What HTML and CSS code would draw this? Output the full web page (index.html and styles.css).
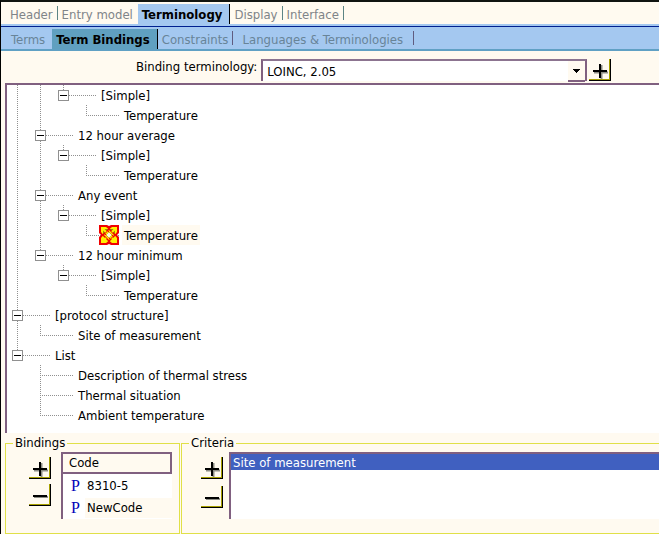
FILE: index.html
```html
<!DOCTYPE html>
<html lang="en">
<head>
<meta charset="utf-8">
<title>Term Bindings</title>
<link rel="stylesheet" href="styles.css">
</head>
<body>
<svg class="defs" width="0" height="0" aria-hidden="true">
  <symbol id="plus" viewBox="0 0 16 16"><path d="M2 9.5h14M9.5 2v14" stroke="#8c8c84" stroke-width="2"/><path d="M1 8h14M8 1v14" stroke="#000" stroke-width="2"/></symbol>
  <symbol id="minus" viewBox="0 0 16 16"><path d="M2 9h14" stroke="#8c8c84" stroke-width="2"/><path d="M1 8h14" stroke="#000" stroke-width="2"/></symbol>
</svg>
<nav class="tabs main-tabs">
  <a href="#header">Header</a>
  <a href="#entry" class="before">Entry model</a>
  <a href="#terminology" class="selected">Terminology</a>
  <a href="#display">Display</a>
  <a href="#interface">Interface</a>
</nav>
<nav class="tabs sub-tabs">
  <a href="#terms" class="before">Terms</a>
  <a href="#bindings" class="selected">Term Bindings</a>
  <a href="#constraints">Constraints</a>
  <a href="#languages" class="wide">Languages &amp; Terminologies</a>
</nav>
<main>
  <div class="picker">
    <label for="terminology">Binding terminology:</label>
    <div class="combo">
      <select id="terminology"><option>LOINC, 2.05</option></select>
      <span class="drop"><svg width="7" height="4" viewBox="0 0 7 4" shape-rendering="crispEdges"><path d="M0 0h7v1H6v1H5v1H4v1H3V3H2V2H1V1H0z"/></svg></span>
    </div>
    <button class="tool" aria-label="Add terminology"><svg width="16" height="16"><use href="#plus"/></svg></button>
  </div>
  <div class="tree">
    <ul>
      <li>
        <ul>
          <li>
            <ul>
              <li><div class="row"><button class="toggle" aria-label="Collapse"></button><span class="name">[Simple]</span></div>
                <ul><li><div class="row"><span class="name">Temperature</span></div></li></ul>
              </li>
            </ul>
          </li>
          <li><div class="row"><button class="toggle" aria-label="Collapse"></button><span class="name">12 hour average</span></div>
            <ul>
              <li><div class="row"><button class="toggle" aria-label="Collapse"></button><span class="name">[Simple]</span></div>
                <ul><li><div class="row"><span class="name">Temperature</span></div></li></ul>
              </li>
            </ul>
          </li>
          <li><div class="row"><button class="toggle" aria-label="Collapse"></button><span class="name">Any event</span></div>
            <ul>
              <li><div class="row"><button class="toggle" aria-label="Collapse"></button><span class="name">[Simple]</span></div>
                <ul><li><div class="row"><svg class="knot" width="20" height="20" viewBox="0 0 20 20">
                  <path d="M0 0h8l2 1 2-1h8v8l-2 2 2 2v8h-8l-2-1-2 1H0v-8l2-2-2-2z" fill="#f00000"/>
                  <path d="M2 2h5l3 2.5L4.500 10 2 7zM18 2h-5l-3 2.500L15.500 10 18 7zM2 18h5l3-2.500L4.500 10 2 13zM18 18h-5l-3-2.500L15.500 10 18 13z" fill="#fff000"/>
                  <path d="M5 9V5h4M11 5h4v4" fill="none" stroke="#302800"/>
                  <path d="M10 4l6 6-6 6-6-6z" fill="#fff000" stroke="#f00000" stroke-width="1.500"/>
                  <path d="M7 7l-3-3M13 7l3-3M7 13l-3 3M13 13l3 3" stroke="#fff000" stroke-width="2"/>
                  <path d="M6 9l6 6M8 5l6 6" stroke="#f00000"/>
                  <path d="M10 7l3 3-3 3-3-3z" fill="#fffbd8" stroke="#b0a000" stroke-width=".5"/>
                </svg><span class="name current">Temperature</span></div></li></ul>
              </li>
            </ul>
          </li>
          <li><div class="row"><button class="toggle" aria-label="Collapse"></button><span class="name">12 hour minimum</span></div>
            <ul>
              <li><div class="row"><button class="toggle" aria-label="Collapse"></button><span class="name">[Simple]</span></div>
                <ul><li><div class="row"><span class="name">Temperature</span></div></li></ul>
              </li>
            </ul>
          </li>
        </ul>
      </li>
      <li><div class="row"><button class="toggle" aria-label="Collapse"></button><span class="name">[protocol structure]</span></div>
        <ul><li><div class="row"><span class="name">Site of measurement</span></div></li></ul>
      </li>
      <li><div class="row"><button class="toggle" aria-label="Collapse"></button><span class="name">List</span></div>
        <ul>
          <li><div class="row"><span class="name">Description of thermal stress</span></div></li>
          <li><div class="row"><span class="name">Thermal situation</span></div></li>
          <li><div class="row"><span class="name">Ambient temperature</span></div></li>
        </ul>
      </li>
    </ul>
  </div>
  <div class="groups">
    <fieldset class="bindings">
      <legend>Bindings</legend>
      <div class="group-body">
        <div class="tools">
          <button class="tool" aria-label="Add binding"><svg width="16" height="16"><use href="#plus"/></svg></button>
          <button class="tool" aria-label="Remove binding"><svg width="16" height="16"><use href="#minus"/></svg></button>
        </div>
        <table>
          <thead><tr><th>Code</th></tr></thead>
          <tbody>
            <tr><td><span class="cell"><span class="mark">P</span><span class="code">8310-5</span></span></td></tr>
            <tr><td><span class="cell"><span class="mark">P</span><span class="code current">NewCode</span></span></td></tr>
          </tbody>
        </table>
      </div>
    </fieldset>
    <fieldset class="criteria">
      <legend>Criteria</legend>
      <div class="group-body">
        <div class="tools">
          <button class="tool" aria-label="Add criterion"><svg width="16" height="16"><use href="#plus"/></svg></button>
          <button class="tool" aria-label="Remove criterion"><svg width="16" height="16"><use href="#minus"/></svg></button>
        </div>
        <select class="list" size="3" aria-label="Criteria"><option selected>Site of measurement</option></select>
      </div>
    </fieldset>
  </div>
</main>
</body>
</html>
```
FILE: styles.css
```css
* { box-sizing: border-box; }

body {
  margin: 0;
  min-height: 100vh;
  display: flex;
  flex-direction: column;
  overflow: hidden;
  border-top: 2px solid #101410;
  border-left: 1px solid #000;
  background: #fffaf0;
  color: #000;
  font: 13px/20px "DejaVu Sans Condensed", "DejaVu Sans", sans-serif;
  font-stretch: condensed;
}

.defs { display: block; }

button, select { font: inherit; color: inherit; }

.tabs { display: flex; align-items: flex-end; }

.tabs a {
  position: relative;
  padding: 2px 5px 0 4px;
  line-height: 18px;
  color: #808488;
  text-decoration: none;
  white-space: nowrap;
}

.tabs a::after {
  content: "";
  position: absolute;
  right: 0;
  top: 2px;
  width: 1px;
  height: 14px;
  background: #5c8484;
}

.tabs a.before::after { content: none; }
.tabs a.selected { padding-right: 8px; color: #000; font-weight: bold; }
.tabs a.selected::after { top: 0; height: 100%; background: #000; }

.main-tabs {
  height: 25px;
  padding: 0 5px;
  border-bottom: 1px solid #002090;
  background: linear-gradient(#a4c8f0, #a4c8f0) bottom / 100% 2px no-repeat;
}
.main-tabs a { margin-bottom: 2px; }
.main-tabs a.selected { background: #a4c8f0; }

.sub-tabs {
  height: 24px;
  padding: 0 6px;
  border-bottom: 2px solid #60a0c4;
  background: #a4c8f0;
}
.sub-tabs a { color: #688498; }
.sub-tabs a::after { background: #605c80; }
.sub-tabs a.before { padding-right: 7px; }
.sub-tabs a.selected { background: #60a0c0; }
.sub-tabs a.wide { padding: 2px 11px 0 9px; }

main { flex: 1; display: flex; flex-direction: column; padding: 8px 0 0 4px; }

.picker { display: flex; align-items: flex-start; gap: 2px; padding: 0 48px 0 131px; }
.picker label { line-height: 16px; margin-right: 2px; white-space: nowrap; }

.combo {
  flex: 1;
  display: grid;
  grid-template-columns: 1fr 17px;
  height: 22px;
  border: 2px solid #806080;
  border-top-color: #8c7490;
  border-bottom: 0;
  background: #fff;
}
.combo select {
  grid-area: 1 / 1 / 2 / 3;
  appearance: none;
  border: 0;
  padding: 1px 20px 0 4px;
  background: transparent;
}
.drop {
  grid-area: 1 / 2;
  display: grid;
  place-items: center;
  border-bottom: 2px solid #806080;
  background: #fffaf0;
  pointer-events: none;
}

.tool {
  width: 22px;
  height: 22px;
  padding: 0;
  display: flex;
  align-items: center;
  justify-content: center;
  border: 0 solid #000;
  border-width: 0 1px 1px 0;
  box-shadow: inset -1px -1px #a8a000;
  background: #fffaf0;
}
.tool svg { display: block; margin: 3px 0 0; }

.tree {
  flex: 1;
  margin-top: 2px;
  border: 0 solid #806080;
  border-width: 2px 0 0 2px;
  background: #fff;
}
.tree ul { margin: 0; padding: 0; list-style: none; }
.tree > ul { padding-left: 10px; }
.tree li ul { padding-left: 23px; }
.tree li {
  background: repeating-linear-gradient(#909090 0 1px, transparent 1px 2px) 0 0 / 1px 100% no-repeat;
}
.tree li:last-child { background-size: 1px 10px; }

.row {
  display: flex;
  align-items: center;
  height: 20px;
  background: repeating-linear-gradient(90deg, #909090 0 1px, transparent 1px 2px) 0 10px / 33px 1px no-repeat;
}
.name { padding: 2px 2px 0; margin-left: 36px; line-height: 18px; white-space: nowrap; }
.current { background: #fffaf0; }

.toggle {
  width: 11px;
  height: 11px;
  margin: 1px -6px 0 -5px;
  padding: 0;
  border: 1px solid #909090;
  background: linear-gradient(#000, #000) center / 7px 1px no-repeat #fff;
}
.knot { margin: 0 3px 0 13px; }
.knot + .name { margin-left: 0; }

.groups {
  display: flex;
  gap: 1px;
  padding-top: 1px;
}
fieldset {
  min-width: 0;
  margin: 0;
  padding: 0;
  border: 1px solid #e0e048;
}
legend { margin-left: 7px; padding: 0 2px; line-height: 18px; }
.bindings { width: 175px; }
.criteria { flex: 1; border-right: 0; }

.group-body { display: flex; gap: 10px; height: 81px; padding-bottom: 14px; }
.tools { display: flex; flex-direction: column; gap: 5px; padding: 5px 0 0 23px; }
.criteria .tools { gap: 7px; padding-left: 19px; }
.criteria .group-body { gap: 6px; }

table {
  width: 111px;
  border-collapse: separate;
  border-spacing: 0;
  border-left: 2px solid #806080;
  border-top: 2px solid #806080;
  background: #fff;
}
th, td { padding: 0; text-align: left; font-weight: normal; }
th {
  height: 20px;
  padding-left: 6px;
  border: 0 solid #806080;
  border-width: 0 2px 2px 0;
  background: #fffaf0;
  line-height: 18px;
}
td { height: 22px; }
.cell { display: flex; gap: 4px; padding: 1px 0 0 8px; }
.mark { width: 10px; font: 16px/20px "Liberation Serif", serif; color: #0000b8; -webkit-text-stroke: 0; }
.code { flex: 1; padding-left: 2px; }

.list {
  flex: 1;
  padding: 0;
  border: 0 solid #806080;
  border-width: 2px 0 0 2px;
  border-radius: 0;
  background: #fff;
  outline: 0;
  overflow: hidden;
}
.list option { padding: 1px 2px 0; min-height: 16px; line-height: 16px; }
.list option:checked { background: linear-gradient(#4060c0, #4060c0); color: #fff; }
```
